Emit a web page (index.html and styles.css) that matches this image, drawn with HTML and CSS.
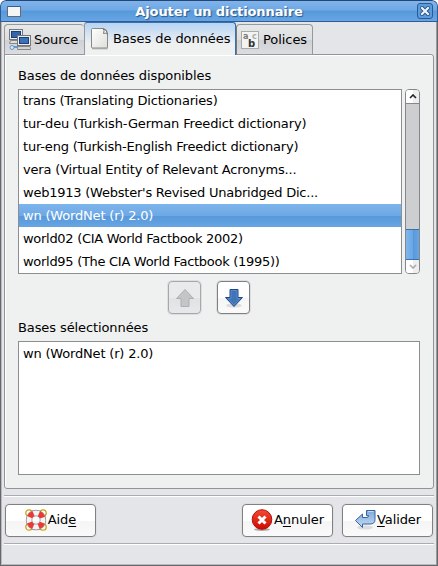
FILE: index.html
```html
<!DOCTYPE html>
<html lang="fr">
<head>
<meta charset="utf-8">
<title>Ajouter un dictionnaire</title>
<link rel="stylesheet" href="styles.css">
</head>
<body>
<div class="window">
  <header class="titlebar">
    <svg class="winicon" width="14" height="11" viewBox="0 0 14 11"><rect x=".5" y=".5" width="13" height="10" fill="#f5f5f3" stroke="#626b73"/><path d="M1 .5h12" stroke="#315f9b"/></svg>
    <h1>Ajouter un dictionnaire</h1>
    <button class="close" aria-label="Fermer"><svg width="10" height="10" viewBox="0 0 10 10"><path d="M2 2l6 6M8 2L2 8" stroke="#255184" stroke-width="4" stroke-linecap="square"/><path d="M2 2l6 6M8 2L2 8" stroke="#eef5fc" stroke-width="2.2" stroke-linecap="square"/></svg></button>
  </header>
  <main class="body">
    <nav class="tabs">
      <div class="tab source">
        <svg width="22" height="22" viewBox="0 0 22 22"><rect x=".5" y=".5" width="13" height="10" fill="#eeeeea" stroke="#777"/><rect x="2.5" y="2.5" width="9" height="6" fill="#3265ad" stroke="#173e7d"/><path d="M1.500 11.500h12l1 3h-14z" fill="#ddd" stroke="#888"/><path d="M2 18h7" stroke="#5f98cb" stroke-width="2"/><circle cx="3" cy="18.500" r="2" fill="#d6e7f4" stroke="#5f98cb"/><rect x="8.500" y="6.500" width="13" height="10" fill="#eeeeea" stroke="#777"/><rect x="10.500" y="8.500" width="9" height="6" fill="#3b70ba" stroke="#173e7d"/><path d="M9 17.500h12l.5 3h-13z" fill="#e8e8e4" stroke="#888"/><path d="M10 19h10" stroke="#bbb"/></svg>
        <span>Source</span>
      </div>
      <div class="tab active">
        <svg width="20" height="23" viewBox="0 0 20 23"><defs><linearGradient id="paper" x2="1" y2="1"><stop stop-color="#fff"/><stop offset="1" stop-color="#dededa"/></linearGradient></defs><path d="M2 21.500h16" stroke="#999" stroke-width="2" opacity=".5"/><path d="M2.500 1.500h11q4 1 4 5v13.500q0 1-1 1h-14q-1 0-1-1v-17.500q0-1 1-1z" fill="url(#paper)" stroke="#888985"/><path d="M13 1.500q2 2 .5 5 2-1 4 .5-.5-4-4.500-5.500z" fill="#fff" stroke="#777"/></svg>
        <span>Bases de données</span>
      </div>
      <div class="tab fonts">
        <svg width="18" height="18" viewBox="0 0 18 18"><rect x=".5" y=".5" width="17" height="17" fill="#f3f3f1" stroke="#aaa"/><g font-family="DejaVu Sans" font-weight="bold"><text x="2" y="7.500" font-size="8" fill="#777">a</text><text x="11" y="7.500" font-size="8" fill="#aaa">c</text><text x="7" y="16" font-size="10" fill="#2e3436">b</text></g></svg>
        <span>Polices</span>
      </div>
    </nav>
    <section class="panel">
      <h2>Bases de données disponibles</h2>
      <div class="available">
        <ul class="list">
          <li>trans (Translating Dictionaries)</li>
          <li class="loose">tur-deu (Turkish-German Freedict dictionary)</li>
          <li>tur-eng (Turkish-English Freedict dictionary)</li>
          <li>vera (Virtual Entity of Relevant Acronyms...</li>
          <li class="tight">web1913 (Webster's Revised Unabridged Dic...</li>
          <li class="selected">wn (WordNet (r) 2.0)</li>
          <li class="tighter">world02 (CIA World Factbook 2002)</li>
          <li class="tighter">world95 (The CIA World Factbook (1995))</li>
        </ul>
        <div class="scrollbar">
          <div class="step"><svg width="8" height="5" viewBox="0 0 8 5"><path d="M1 4l3-3 3 3" fill="none" stroke="#222" stroke-width="1.600"/></svg></div>
          <div class="trough"></div>
          <div class="thumb"></div>
          <div class="step last"><svg width="8" height="5" viewBox="0 0 8 5"><path d="M1 1l3 3 3-3" fill="none" stroke="#aaa" stroke-width="1.600"/></svg></div>
        </div>
      </div>
      <div class="movers">
        <button class="btn square disabled" aria-label="Retirer"><svg width="20" height="20" viewBox="0 0 20 20"><path d="M10 1.500l8.500 9h-4.500v8h-8v-8h-4.500z" fill="#c4c5c6" stroke="#adaeb0"/></svg></button>
        <button class="btn square" aria-label="Ajouter"><svg width="20" height="20" viewBox="0 0 20 20"><ellipse cx="10" cy="17.500" rx="8" ry="2" fill="#ddd"/><path d="M10 18.500l8.500-9h-4.500v-8h-8v8h-4.500z" fill="#3f74b8" stroke="#204a87"/><path d="M10 17l6-6.500h-3v-8h-6v8h-3z" fill="none" stroke="#6c98cf" opacity=".6"/></svg></button>
      </div>
      <h2 class="chosen-label">Bases sélectionnées</h2>
      <ul class="list chosen"><li>wn (WordNet (r) 2.0)</li></ul>
    </section>
    <hr>
    <footer class="actions">
      <button class="btn help"><svg width="22" height="22" viewBox="0 0 22 22"><g fill="none" stroke="#c9a415" stroke-width="1.300"><circle cx="4" cy="4" r="3.200"/><circle cx="18" cy="4" r="3.200"/><circle cx="4" cy="18" r="3.200"/><circle cx="18" cy="18" r="3.200"/></g><circle cx="11" cy="11" r="7" fill="none" stroke="#888" stroke-width="6.500"/><circle cx="11" cy="11" r="7" fill="none" stroke="#f4f4f2" stroke-width="5"/><circle cx="11" cy="11" r="7" fill="none" stroke="#e93a38" stroke-width="5.500" stroke-dasharray="5.500 5.496" stroke-dashoffset="-2.750"/></svg><span>Aid<u>e</u></span></button>
      <button class="btn cancel"><svg width="22" height="22" viewBox="0 0 22 22"><defs><linearGradient id="red" x2="0" y2="1"><stop stop-color="#f34a35"/><stop offset="1" stop-color="#cf0800"/></linearGradient></defs><ellipse cx="11" cy="20.500" rx="8" ry="1.500" fill="#aaa"/><circle cx="11" cy="10.500" r="9.800" fill="url(#red)" stroke="#b01208"/><path d="M7.500 7.500l7 7M14.500 7.500l-7 7" stroke="#fff" stroke-width="3"/></svg><span>A<u>n</u>nuler</span></button>
      <button class="btn ok"><svg width="22" height="22" viewBox="0 0 22 22"><defs><linearGradient id="blue" x2="0" y2="1"><stop stop-color="#7da9dc"/><stop offset="1" stop-color="#c6dbf1"/></linearGradient></defs><ellipse cx="11" cy="18.500" rx="8" ry="2" fill="#ddd"/><path d="M1.500 11.500l7-6.500v3.500h4.500q1.500 0 1.500-2h-2v-5h8.500v9q0 4.500-5 4.500h-7.500v3.500z" fill="url(#blue)" stroke="#3465a4"/><path d="M14 2.500h5.500" stroke="#c6dbf1"/></svg><span><u>V</u>alider</span></button>
    </footer>
    <hr class="lower">
  </main>
</div>
</body>
</html>
```
FILE: styles.css
```css
* { box-sizing: border-box; }
html, body { margin: 0; height: 566px; overflow: hidden; background: #fff; }
body { font: 13px/16px "DejaVu Sans", sans-serif; color: #000; }
h1, h2, ul, hr { margin: 0; padding: 0; font-size: inherit; font-weight: normal; }
h2 { letter-spacing: -.1px; }
button { margin: 0; padding: 0; font: inherit; color: inherit; }
svg { display: block; flex: none; }
.window { width: 438px; height: 566px; border-radius: 6px 6px 0 0; overflow: hidden; background: #e4e5e8; display: flex; flex-direction: column; }
.titlebar { height: 22px; flex: none; display: flex; align-items: center; padding: 0 6px 0 7px; border: 1px solid #315c91; border-top-color: #264773; border-radius: 6px 6px 0 0; background: linear-gradient(#80b4ec, #6fa8e5 45%, #5699dc 50%, #67a5e4); }
.titlebar .winicon { margin-left: -1px; }
.titlebar h1 { flex: 1; padding-top: 2px; text-align: center; color: #fff; font-weight: bold; letter-spacing: -.1px; text-shadow: 1px 1px 1px #2b5688; }
.close { width: 16px; height: 16px; display: flex; align-items: center; justify-content: center; background: #5b9bdc; border: 1px solid #285b94; border-radius: 3px; margin-right: -2px; }
.body { height: 544px; border: solid #66676a; border-width: 0 1px 1px; padding: 0 3px; box-shadow: inset 1px 0 #b9babd, inset -1px 0 #999a9c, inset 0 -1px #b9babd; }
.tabs { height: 33px; display: flex; align-items: flex-end; position: relative; z-index: 1; }
.tab { height: 31px; display: flex; align-items: center; border: 1px solid #96989b; border-radius: 4px 4px 0 0; background: linear-gradient(#e6e7e9, #dedfe1 50%, #d0d1d4 51%, #dcdde0); }
.tab span { white-space: nowrap; letter-spacing: -.06px; }
.source { width: 80px; padding-left: 4px; gap: 3px; border-right: 0; }
.active { width: 152px; height: 33px; padding: 0 0 1px 5px; gap: 3px; background: linear-gradient(#b6d4f4, #eff1f1 65%); border-color: #3970b0 #3970b0 transparent #96989b; border-bottom: 0; border-radius: 3px 3px 0 0; }
.fonts { width: 77px; padding-left: 4px; gap: 4px; border-left-color: #777; }
.panel { height: 435px; margin-top: -1px; border: 1px solid #929497; border-radius: 0 3px 3px 3px; background: #eff1f1; padding: 13px 13px 0; box-shadow: inset 1px 1px #fff; }
.available { display: flex; gap: 3px; margin-top: 5px; }
.list { list-style: none; border: 1px solid #8c8e90; background: #fff; overflow: hidden; letter-spacing: -.18px; }
.available .list { width: 384px; height: 185px; }
.list li { height: 23px; line-height: 23px; padding-left: 4px; white-space: nowrap; }
.list li:first-child { margin-top: -1px; }
.list .loose { letter-spacing: -.13px; }
.list .tight { letter-spacing: -.23px; }
.list .tighter { letter-spacing: -.29px; }
.list .selected { color: #fff; background: linear-gradient(#7db4ec, #6ea9e5 50%, #5698da 52%, #68a5e3); }
.scrollbar { width: 15px; height: 185px; border: 1px solid #85878a; border-radius: 4px; overflow: hidden; display: flex; flex-direction: column; }
.step { height: 14px; display: flex; align-items: center; justify-content: center; background: linear-gradient(90deg, #fff 50%, #eee 50%); border-bottom: 1px solid #85878a; }
.step.last { height: 13px; border: 0; }
.trough { flex: 1; background: #cdced0; }
.thumb { height: 31px; border: solid #3970b0; border-width: 1px 0; background: linear-gradient(90deg, #80b6ee, #6ba7e5 50%, #5698da 52%, #68a5e3); }
.btn { height: 33px; display: flex; align-items: center; justify-content: center; border: 1px solid #7e8083; border-radius: 4px; background: linear-gradient(#fff 50%, #f5f5f6 52%, #fafafa); box-shadow: 0 0 0 1px #dcdee0; }
.movers { display: flex; gap: 16px; margin: 7px 0 6px 150px; }
.square { width: 33px; }
.disabled { border-color: #a7a8ab; background: linear-gradient(#e9eaeb 50%, #e1e2e4 52%, #e7e8e9); }
.chosen { width: 402px; height: 134px; margin-top: 5px; }
.chosen li:first-child { margin-top: 0; }
hr { height: 2px; border: 0; border-top: 1px solid #aaacaf; border-bottom: 1px solid #fff; margin-top: 6px; }
.actions { display: flex; padding: 7px 0 0 1px; }
.actions .btn { width: 91px; gap: 1px; padding-bottom: 1px; letter-spacing: -.1px; }
.cancel { margin-left: 146px; }
.ok { margin-left: 9px; }
u { text-decoration-thickness: 1px; text-underline-offset: 2px; }
```
